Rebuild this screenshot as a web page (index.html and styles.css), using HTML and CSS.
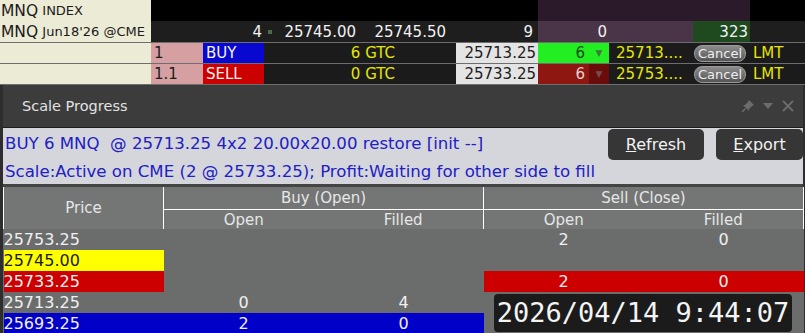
FILE: index.html
```html
<!DOCTYPE html>
<html lang="en">
<head>
    <meta charset="UTF-8">
    <meta name="viewport" content="width=device-width, initial-scale=1.0">
    <title>Scale Progress</title>
    <link rel="stylesheet" href="styles.css">
</head>
<body>

<!-- Order rows above the panel -->
<div class="orders">
    <div class="row r1">
        <div class="c sym"><span class="big">MNQ</span>&nbsp;INDEX</div>
        <div class="c black w387"></div>
        <div class="c plum-dk w212"></div>
        <div class="c black grow"></div>
    </div>
    <div class="row r2">
        <div class="c sym"><span class="big">MNQ</span>&nbsp;Jun18'26 @CME</div>
        <div class="c num w113 right">4</div>
        <div class="c num w96 right"><span class="dot"></span>25745.00</div>
        <div class="c num w90 right">25745.50</div>
        <div class="c num w88 right pr5">9</div>
        <div class="c num plum w71 right">0</div>
        <div class="c plum w84"></div>
        <div class="c num pnl w57 right">323</div>
        <div class="c grow"></div>
    </div>
    <div class="row r3">
        <div class="c sym"></div>
        <div class="c pink w52">1</div>
        <div class="c buy w61">BUY</div>
        <div class="c yel w192 right pr61">6 GTC</div>
        <div class="c lim w82 right">25713.25</div>
        <div class="c qty-buy w71 right">6<span class="arrow">&#9660;</span></div>
        <div class="c yel w84 pl7">25713....</div>
        <div class="c w57"><span class="cancel">Cancel</span></div>
        <div class="c yel grow pl3">LMT</div>
    </div>
    <div class="row r4">
        <div class="c sym"></div>
        <div class="c pink w52">1.1</div>
        <div class="c sell w61">SELL</div>
        <div class="c yel w192 right pr61">0 GTC</div>
        <div class="c lim w82 right">25733.25</div>
        <div class="c qty-sell w71 right">6<span class="arrow">&#9660;</span></div>
        <div class="c yel w84 pl7">25753....</div>
        <div class="c w57"><span class="cancel">Cancel</span></div>
        <div class="c yel grow pl3">LMT</div>
    </div>
</div>

<!-- Scale Progress panel -->
<div class="panel">
    <div class="title-bar">
        <span class="title">Scale Progress</span>
        <span class="tools">
            <svg width="14" height="14" viewBox="0 0 14 14">
                <path d="M8 1 L13 6 L11 7 L8 10 L8 12 L2 6 L4 6 L7 3 Z" fill="#6c6c6c"/>
                <path d="M4.5 9.5 L1 13" stroke="#6c6c6c" stroke-width="1.5"/>
            </svg>
            <svg width="12" height="12" viewBox="0 0 12 12">
                <path d="M1 3 L11 3 L6 9 Z" fill="#6c6c6c"/>
            </svg>
            <svg width="14" height="14" viewBox="0 0 14 14">
                <path d="M2 2 L12 12 M12 2 L2 12" stroke="#6c6c6c" stroke-width="1.8"/>
            </svg>
        </span>
    </div>
    <div class="info">
        <div class="info-text">
            <div>BUY 6 MNQ&nbsp; @ 25713.25 4x2 20.00x20.00 restore [init --]</div>
            <div>Scale:Active on CME (2 @ 25733.25); Profit:Waiting for other side to fill</div>
        </div>
        <div class="buttons">
            <button class="btn refresh"><u>R</u>efresh</button>
            <button class="btn export"><u>E</u>xport</button>
        </div>
    </div>
    <table class="grid">
        <colgroup>
            <col class="col"><col class="col"><col class="col"><col class="col"><col class="col">
        </colgroup>
        <thead>
            <tr class="h1">
                <th rowspan="2" class="price-h">Price</th>
                <th colspan="2" class="grp">Buy (Open)</th>
                <th colspan="2" class="grp">Sell (Close)</th>
            </tr>
            <tr class="h2">
                <th>Open</th>
                <th class="edge">Filled</th>
                <th>Open</th>
                <th class="edge">Filled</th>
            </tr>
        </thead>
        <tbody>
            <tr>
                <td class="price">25753.25</td><td></td><td></td><td>2</td><td>0</td>
            </tr>
            <tr>
                <td class="price last">25745.00</td><td></td><td></td><td></td><td></td>
            </tr>
            <tr>
                <td class="price red">25733.25</td><td></td><td></td><td class="red">2</td><td class="red">0</td>
            </tr>
            <tr>
                <td class="price">25713.25</td><td>0</td><td>4</td><td></td><td></td>
            </tr>
            <tr>
                <td class="price blue">25693.25</td><td class="blue">2</td><td class="blue">0</td><td></td><td></td>
            </tr>
        </tbody>
    </table>
</div>

<div class="clock">2026/04/14 9:44:07</div>

</body>
</html>
```

FILE: styles.css
```css
body {
    margin: 0;
    width: 805px;
    height: 333px;
    overflow: hidden;
    position: relative;
    background-color: #3a3a3a;
    font-family: "DejaVu Sans", Verdana, sans-serif;
}

/* order rows */
.orders {
    background: #1b1b1b;
}
.row {
    display: flex;
    height: 21px;
}
.row.r2, .row.r3, .row.r4 {
    border-bottom: 1px solid #6e6e6e;
}
.row.r3, .row.r4 {
    height: 20px;
}
.c {
    display: flex;
    align-items: center;
    box-sizing: border-box;
    white-space: nowrap;
    font-size: 15px;
    color: #f2f2f2;
    flex-shrink: 0;
}
.sym {
    width: 151px;
    background: #ecebd5;
    color: #1a1a1a;
    font-size: 13px;
    padding-left: 1px;
}
.sym .big {
    font-size: 15.5px;
}
.r1 {
    background: #000;
}
.r2 {
    background: #1e1e1e;
}
.black {
    background: #000;
}
.plum-dk {
    background: #2b1a2a;
}
.plum {
    background: #4a3447;
}
.pnl {
    background: #1f4a1f;
    padding-right: 4px;
}
.right {
    justify-content: flex-end;
    padding-right: 2px;
}
.grow {
    flex: 1;
}
.w387 { width: 387px; }
.w212 { width: 212px; }
.w113 { width: 113px; }
.w96 { width: 96px; padding-right: 4px; }
.w90 { width: 90px; padding-right: 4px; }
.w88 { width: 88px; }
.w71 { width: 71px; }
.w84 { width: 84px; }
.w57 { width: 57px; }
.w52 { width: 52px; }
.w61 { width: 61px; }
.w192 { width: 192px; }
.w82 { width: 82px; }
.pr5 { padding-right: 5px; }
.pr61 { padding-right: 61px; }
.pl7 { padding-left: 7px; }
.pl3 { padding-left: 3px; }
.dot {
    width: 4px;
    height: 4px;
    background: #4c6a4c;
    margin-right: auto;
    margin-left: 4px;
}
.pink {
    background: #d6a0a3;
    color: #1c1c1c;
    padding-left: 3px;
}
.buy {
    background: #0808d0;
    padding-left: 3px;
}
.sell {
    background: #cc0000;
    padding-left: 3px;
}
.yel {
    color: #e6e600;
}
.lim {
    background: #e4e4e4;
    color: #1c1c1c;
}
.qty-buy {
    background: #22ee22;
    color: #1a4a1a;
    padding-right: 0;
}
.qty-sell {
    background: #8e1712;
    color: #e8d0d0;
    padding-right: 0;
}
.arrow {
    font-size: 9px;
    color: #3a7a3a;
    width: 20px;
    height: 100%;
    display: flex;
    align-items: center;
    justify-content: center;
}
.qty-sell .arrow {
    background: #6a0c0a;
    color: #7a4a4a;
    margin-left: 4px;
}
.qty-buy .arrow {
    margin-left: 4px;
}
.cancel {
    display: inline-block;
    margin-left: 1px;
    height: 17px;
    line-height: 15px;
    box-sizing: border-box;
    padding: 0 3px;
    border-radius: 8px;
    border: 1px solid #9a9a9a;
    background: linear-gradient(#8c8c8c, #555);
    color: #eee;
    font-size: 13px;
}

/* panel */
.panel {
    border-left: 3px solid #2d2d2d;
    border-right: 2px solid #2d2d2d;
}
.title-bar {
    height: 42px;
    background: #3c3c3c;
    border-bottom: 1px solid #1c1c1c;
    display: flex;
    align-items: center;
    justify-content: space-between;
}
.title {
    color: #e2e2e2;
    font-size: 14.5px;
    margin-left: 19px;
}
.tools {
    display: flex;
    align-items: center;
    gap: 7px;
    margin-right: 8px;
}
.info {
    height: 56px;
    background: #d5d5dc;
    display: flex;
    justify-content: space-between;
    border-bottom: 3px solid #444;
}
.info-text {
    color: #2020c4;
    font-size: 16.6px;
    line-height: 28px;
    padding-left: 2px;
    padding-top: 2px;
    white-space: nowrap;
}
.buttons {
    display: flex;
    gap: 12px;
    padding-top: 1px;
}
.btn {
    height: 31px;
    border: none;
    border-radius: 5px;
    background: #363636;
    color: #f2f2f2;
    font-family: inherit;
    font-size: 16px;
    padding: 0;
    cursor: pointer;
}
.refresh {
    width: 96px;
}
.export {
    width: 87px;
}

/* table */
.grid {
    width: 800px;
    border-collapse: collapse;
    table-layout: fixed;
    background: #6b6d6d;
    color: #f0f0f0;
}
.col {
    width: 160px;
}
.grid th {
    font-weight: normal;
    font-size: 15px;
    color: #e6e6e6;
    background: #747676;
    padding: 0;
}
.grid .h1 th {
    height: 22px;
}
.grid .h2 th {
    height: 19px;
}
.grid .price-h {
    border-left: 1px solid #fff;
    border-right: 1px solid #fff;
}
.grid .grp {
    border-right: 1px solid #fff;
    border-bottom: 1px solid #fff;
}
.grid .edge {
    border-right: 1px solid #fff;
}
.grid td {
    height: 21px;
    padding: 0;
    font-size: 16px;
    text-align: center;
}
.grid td.price {
    text-align: left;
}
.grid td.last {
    background: #ffff00;
    color: #1a1a1a;
}
.grid td.red {
    background: #cc0000;
}
.grid td.blue {
    background: #0000c8;
}

.clock {
    position: absolute;
    left: 494px;
    top: 294px;
    width: 298px;
    height: 38px;
    border-radius: 4px;
    background: #1b1b1b;
    color: #f4f4f4;
    font-family: "DejaVu Sans Mono", monospace;
    font-size: 27px;
    line-height: 38px;
    text-align: center;
}
```
